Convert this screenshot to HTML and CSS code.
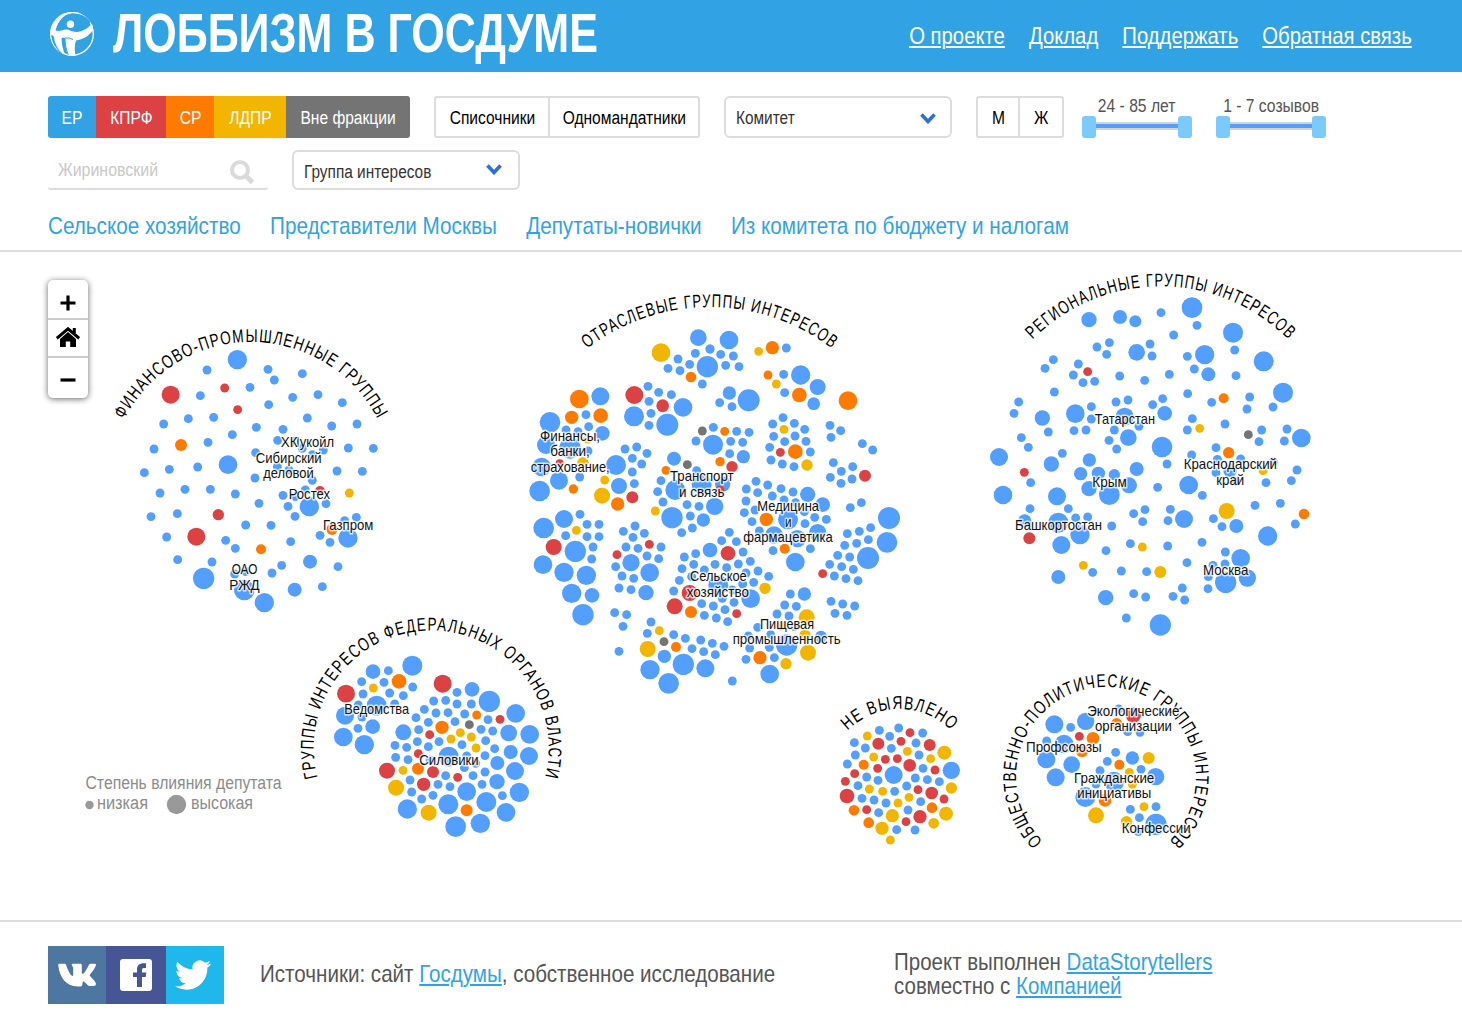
FILE: index.html
```html
<!DOCTYPE html>
<html lang="ru">
<head>
<meta charset="utf-8">
<title>Лоббизм в Госдуме</title>
<link rel="stylesheet" href="styles.css">
</head>
<body>
<header class="header">
  <a class="brand">
    <svg class="logo" viewBox="0 0 44 44" width="44" height="44">
      <ellipse cx="22" cy="22" rx="21.3" ry="21.3" fill="none" stroke="#fff" stroke-width="1.3"/>
      <path fill="#fff" d="M31 1.500C19-1.500 9 5 5.500 18.500c3 .8 6 .3 9-.7 4-1 7 2.500 12 2.200 6-.3 11-3.500 15.500-8 1 2.500 1.200 4 .9 6C39 24 33 27.500 26 28.500c-1.500 4.500-1.600 9-.5 15-3 .6-5 .4-7.500 0-2-5-2.800-10-3-17.500-1.500-.3-2.500-.3-3.300 0-.4 5.500.9 10.500 3.300 16.500C10 40 5 34 3.800 24.500L.8 23C-1 9 14-4.500 31 1.500z"/>
      <path fill="#31a3e5" d="M29.500 2.300C18 0 8.500 7 6.500 17.300c2.500.5 4.500.2 7-.6 4.500-1.300 8.500 2 13 1.800 5.500-.3 11-4 14-8.500C38 6.500 34.500 3.700 29.500 2.300z"/>
      <path fill="none" stroke="#31a3e5" stroke-width="1" d="M15 26q5-.5 8 1.500M14.800 26q0 9 3.500 17M2 23q1 12 10 18.500"/>
      <ellipse cx="20.500" cy="12.300" rx="3.700" ry="3.700" fill="#fff"/>
    </svg>
    <span class="title">ЛОББИЗМ В ГОСДУМЕ</span>
  </a>
  <nav class="nav">
    <a>О проекте</a><a>Доклад</a><a>Поддержать</a><a>Обратная связь</a>
  </nav>
</header>

<section class="filters">
  <div class="row row-top">
    <div class="factions">
      <button class="f-er"><span>ЕР</span></button><button class="f-kprf"><span>КПРФ</span></button><button class="f-sr"><span>СР</span></button><button class="f-ldpr"><span>ЛДПР</span></button><button class="f-none"><span>Вне фракции</span></button>
    </div>
    <div class="toggle toggle-type"><button><span>Списочники</span></button><button><span>Одномандатники</span></button></div>
    <div class="select"><span>Комитет</span>
      <svg viewBox="0 0 16 11" width="16" height="11"><path d="M1.500 1.500l6.500 7 6.500-7" fill="none" stroke="#2f6fdb" stroke-width="3.600"/></svg></div>
    <div class="toggle toggle-sex"><button><span>М</span></button><button><span>Ж</span></button></div>
    <div class="ranges">
      <div class="range"><span class="range-label">24 - 85 лет</span><div class="track"><i></i><b></b><i></i></div></div>
      <div class="range"><span class="range-label">1 - 7 созывов</span><div class="track"><i></i><b></b><i></i></div></div>
    </div>
  </div>
  <div class="row row-second">
    <div class="search"><span>Жириновский</span>
      <svg viewBox="0 0 24 24" width="24" height="24" fill="none" stroke="#dadada"><circle cx="10" cy="10" r="8" stroke-width="4"/><path d="M15.500 15.500l7 7" stroke-width="5"/></svg></div>
    <div class="select select-low"><span>Группа интересов</span>
      <svg viewBox="0 0 16 11" width="16" height="11"><path d="M1.500 1.500l6.500 7 6.500-7" fill="none" stroke="#2f6fdb" stroke-width="3.600"/></svg></div>
  </div>
  <nav class="presets">
    <a>Сельское хозяйство</a><a>Представители Москвы</a><a>Депутаты-новички</a><a>Из комитета по бюджету и налогам</a>
  </nav>
</section>

<main class="map">
  <svg id="bubbles" viewBox="0 252 1462 668" width="1462" height="668"></svg>
  <div class="zoomer">
    <button><svg viewBox="0 0 16 16" width="16" height="16"><path d="M8 .5v15M.5 8h15" stroke="#000" stroke-width="3.200"/></svg></button>
    <button><svg viewBox="0 0 24 20" width="24" height="20"><path d="M.8 11.300L12 1.800l11.200 9.500M18.300 6V1" fill="none" stroke="#000" stroke-width="3"/><path d="M4 12l8-7 8 7v8h-5.800v-5.500H9.800V20H4z"/></svg></button>
    <button><svg viewBox="0 0 16 16" width="16" height="16"><path d="M.5 8h15" stroke="#000" stroke-width="3.200"/></svg></button>
  </div>
</main>

<footer class="footer">
  <div class="social">
    <a class="vk"><svg viewBox="0 0 38 24" width="38" height="24"><path fill="#fff" d="M20.500 23.500C8 24 1.500 14 .3 2.500 0 1.200.6.700 1.700.700h4.600c1 0 1.500.4 1.900 1.500C9.800 7 12 11.500 14 12.800c.9.400 1.200 0 1.200-1.500V5.500c-.1-2.500-1.500-2.700-1.500-3.600 0-.7.6-1.200 1.500-1.200h7.200c1 0 1.400.5 1.400 1.600v7.400c0 1.500 1.200 1.500 2.300.2 2-2.300 3.500-5 4.700-7.800.4-1 1-1.400 2-1.400h3.700c1.500 0 1.700.8 1.300 1.900-1.300 3.500-3.600 6-5.500 8.600-.7 1-.6 1.500.2 2.300 2 2 3.600 3.700 5 6 .9 1.800.2 3.500-1.700 3.500h-4.200c-1.700 0-2.600-1.500-4-3-1.600-1.800-3-2.200-3-.1 0 1.800-.6 3.400-2.300 3.600z"/></svg></a>
    <a class="fb"><svg viewBox="0 0 32 32" width="32" height="32"><rect width="32" height="32" rx="3" fill="#fff"/><path fill="#465594" d="M17 28V18h-4v-4.500h4v-3.200c0-4.500 2.800-6.600 9-6v4.600h-2.200c-1.400 0-1.800.8-1.800 2v2.600h4.300l-.6 4.500H22V28z"/></svg></a>
    <a class="tw"><svg viewBox="0 2 24 20" width="36" height="30"><path fill="#fff" d="M23.953 4.570a10 10 0 0 1-2.825.775 4.958 4.958 0 0 0 2.163-2.723c-.951.555-2.005.959-3.127 1.184a4.920 4.920 0 0 0-8.384 4.482C7.690 8.095 4.067 6.130 1.640 3.162a4.822 4.822 0 0 0-.666 2.475c0 1.710.870 3.213 2.188 4.096a4.904 4.904 0 0 1-2.228-.616v.060a4.923 4.923 0 0 0 3.946 4.827 4.996 4.996 0 0 1-2.212.085 4.936 4.936 0 0 0 4.604 3.417 9.867 9.867 0 0 1-6.102 2.105c-.390 0-.779-.023-1.170-.067a13.995 13.995 0 0 0 7.557 2.209c9.053 0 13.998-7.496 13.998-13.985 0-.210 0-.420-.015-.630A9.935 9.935 0 0 0 24 4.590z"/></svg></a>
  </div>
  <p class="sources">Источники: сайт <a>Госдумы</a>, собственное исследование</p>
  <p class="credits">Проект выполнен <a>DataStorytellers</a><br>совместно с <a>Компанией</a></p>
</footer>
<script src="bubbles.js"></script>
</body>
</html>
```
FILE: styles.css
```css
* { box-sizing: border-box; }
body {
  margin: 0;
  width: 1462px;
  background: #fff;
  color: #555;
  font-family: "Liberation Sans", Arial, sans-serif;
  font-size: 18px;
}
a { cursor: pointer; }
button { border: 0; padding: 0; margin: 0; font: inherit; background: none; color: #000; }

/* Condensed lettering */
.title, .presets, .sources, .credits, .select span, .search span { transform-origin: 0 50%; }
.title { transform: scaleX(.783); }
.nav { transform: scaleX(.845); transform-origin: 100% 50%; }
.presets { transform: scaleX(.862); }
.factions span, .toggle span { display: inline-block; transform: scaleX(.865); white-space: nowrap; }
.select span { transform: scaleX(.855); }
.search span { transform: scaleX(.885); }
.range-label { transform: scaleX(.87); }
.sources { transform: scaleX(.858); }
.credits { transform: scaleX(.854); }

.header {
  height: 72px;
  background: #31a3e5;
  color: #fff;
  display: flex;
  justify-content: space-between;
  padding: 0 50px;
}
.brand { display: flex; gap: 19px; width: 560px; }
.logo { margin-top: 12px; flex: none; }
.title { font-size: 55px; font-weight: bold; line-height: 67px; white-space: nowrap; }
.nav { display: flex; gap: 28.5px; font-size: 24px; line-height: 72px; }
.nav a { text-decoration: underline; text-decoration-thickness: 2px; text-underline-offset: 2px; white-space: nowrap; }

.filters { height: 180px; padding: 24px 48px 0; border-bottom: 2px solid #dcdcdc; }
.row { display: flex; }
.row-top { height: 54px; gap: 24px; }
.row-second { height: 40px; gap: 24px; }
.factions { display: flex; height: 42px; border-radius: 3px; overflow: hidden; }
.factions button { color: #fff; height: 42px; padding-top: 2px; }
.factions .f-er { width: 48px; background: #31a3e5; }
.factions .f-kprf { width: 70px; background: #dc4243; }
.factions .f-sr { width: 48px; padding-left: 2px; background: #ff7b00; }
.factions .f-ldpr { width: 72px; background: #f3b600; }
.factions .f-none { width: 124px; background: #747474; }
.toggle { display: flex; height: 42px; border: 2px solid #dcdcdc; border-radius: 3px; }
.toggle button { padding-top: 2px; display: flex; justify-content: center; align-items: center; }
.toggle button + button { border-left: 2px solid #dcdcdc; }
.toggle-type { width: 266px; }
.toggle-type button:first-child { width: 112px; }
.toggle-type button:last-child { width: 150px; }
.toggle-sex { width: 88px; }
.toggle-sex button:first-child { width: 40px; }
.toggle-sex button:last-child { width: 44px; }
.select {
  width: 228px;
  height: 42px;
  border: 2px solid #dcdcdc;
  border-radius: 6px;
  display: flex;
  justify-content: space-between;
  align-items: center;
  padding: 2px 14px 0 10px;
  color: #333;
}
.select-low { height: 40px; padding: 4px 16px 0 10px; }
.select-low svg { margin-bottom: 5px; }
.ranges { display: flex; gap: 24px; margin-left: -6px; }
.range { width: 110px; display: flex; flex-direction: column; align-items: center; }
.range-label { line-height: 20px; height: 20px; white-space: nowrap; }
.track { display: flex; align-items: center; width: 110px; height: 22px; }
.track i { width: 14px; height: 22px; border-radius: 3px; background: #7acbfb; }
.track b { flex: 1; height: 8px; margin-top: -2px; background: #529fff; border: solid #d3d3d3; border-width: 2px 0; }
.search {
  width: 220px;
  border-bottom: 2px solid #dcdcdc;
  border-radius: 3px;
  display: flex;
  justify-content: space-between;
  padding: 10px 14px 0 10px;
  line-height: 20px;
  color: #c8c8c8;
}
.presets { display: flex; gap: 34px; margin-top: 20px; font-size: 24px; line-height: 32px; color: #31a3e5; }
.presets a { white-space: nowrap; }

.map { position: relative; height: 668px; overflow: hidden; }
.map > svg { display: block; }
.dot-blue { fill: #529fff; }
.dot-red { fill: #dc4243; }
.dot-orange { fill: #ff7b00; }
.dot-yellow { fill: #f3b600; }
.dot-gray { fill: #747474; }
.arc { font-size: 18.5px; fill: #000; letter-spacing: 1.7px; }
.label {
  font-size: 15px;
  fill: #111;
  stroke: #fff;
  stroke-opacity: .75;
  stroke-width: 3px;
  stroke-linejoin: round;
  paint-order: stroke;
}
.legend { font-size: 18px; fill: #8c8c8c; }
.legend circle { fill: #999; }
.zoomer {
  position: absolute;
  left: 48px;
  top: 28px;
  width: 40px;
  height: 118px;
  display: grid;
  grid-template-rows: 38px 38px 42px;
  background: #fff;
  border-radius: 5px;
  box-shadow: 0 1px 6px rgba(0, 0, 0, .6);
}
.zoomer button { display: grid; place-items: center; padding-top: 8px; }
.zoomer button:nth-child(2) { padding: 0 0 2px; }
.zoomer button:nth-child(3) { padding-top: 4px; }
.zoomer button + button { border-top: 2px solid #ccc; }

.footer { height: 102px; border-top: 2px solid #dcdcdc; padding: 24px 48px 0; display: flex; font-size: 24px; line-height: 24px; }
.footer p { margin: 0; white-space: nowrap; }
.footer p a { color: #31a3e5; text-decoration: underline; text-decoration-thickness: 2px; text-underline-offset: 2px; }
.social { display: flex; flex: none; height: 58px; width: 176px; margin-right: 36px; }
.social a { width: 58px; display: grid; place-items: center; }
.social .vk { background: #4d76a1; }
.social .fb { width: 60px; background: #465594; }
.social .tw { background: #1eb8ec; padding-right: 4px; }
.sources { flex: none; width: 634px; padding-top: 16px; }
.credits { padding-top: 4px; }
```
FILE: bubbles.js
```js
// Each chart tile has an origin in page pixels; dots are "x,y[,r]" in thirds of a pixel.
const tiles = [
  { at: [100, 310], dots: {
    blue: "412,149,29 321,180 504,178 523,210 607,191 450,232 301,257 578,262 654,254 727,278 506,284 341,322 265,326 191,342 622,324 695,348 771,342 469,352 549,358 397,374 324,397 162,417 533,391 607,415 670,420 637,434 745,414 820,415 467,428 384,464,28 293,471 208,478 133,488 532,470 567,480 465,504 711,483 787,484 637,511 255,538 331,538 180,549 406,552 549,556 586,560 616,540 477,580 564,589 628,590,29 678,581 232,611 153,620 585,619 437,645 513,646 734,632 769,622 660,676 744,684,29 690,697 572,695 200,681 377,691 406,715 233,749 336,756 630,755,21 545,766 714,770 516,789 404,792 437,785 311,805,32 433,840,31 493,878,29 584,839,21 667,830",
    red: "212,254,27 374,234 413,299 355,614,17 289,680,27 660,543,15", orange: "243,405,18 483,718,15 696,658,17", yellow: "748,549" } },
  { at: [510, 280], dots: {
    blue: "565,173,25 556,220 600,207 504,237 539,253 474,265 510,272 592,260,32 577,312 271,349,27 414,319 446,337 484,344 417,364 372,409,30 423,400 417,436 472,434,33 519,382,28 120,427,31 228,404 236,440 277,460,22 168,450 204,455 108,495,27 180,504,32 234,513 95,561,28 147,602,27 209,591 318,555,30 345,507 380,501 411,520 367,535 395,552 367,576 373,611 327,618,24 558,483 610,442 609,494,30 492,536,21 560,572 453,602 443,635 496,630,30 575,614,30 638,612,23",
    orange: "208,357,28 185,412,20 272,407,22 543,291,16 190,627,14 468,571", yellow: "453,218,28 233,477 219,548,17 284,600", red: "373,345,27 458,377,19 149,550,12", gray: "577,453 532,554" } },
  { at: [700, 280], dots: {
    blue: "87,180,28 30,207 62,223 100,228 77,256 117,260 259,204 251,283 302,285,29 353,321,24 254,338 341,371,19 88,339,20 59,368 96,380 146,361,33 110,454 147,457 92,484 128,487 89,521 130,530,20 249,413 218,432 283,430 314,448 221,469 285,468 254,485 318,484 209,502 331,516 213,540 247,552 282,560 390,436 422,452 393,472 487,491 518,510 400,548 458,560 424,574 391,592 456,597 423,610 168,604 203,615 139,627",
    orange: "217,203,20 204,285 298,345,22 444,362,28 74,454 60,545,14 286,515,22", yellow: "176,214 229,312 252,448 321,555,17", red: "96,560,17 241,517 495,587,18 60,630" } },
  { at: [510, 480], dots: {
    blue: "89,33,31 101,144,31 162,117,27 210,103 231,133 267,133 167,167 231,170 267,170 196,214,32 249,201 245,237 99,254,28 162,277,29 229,286,29 185,340,29 246,346,22 219,404,32 340,154 375,138 369,172 403,160 348,201 384,205 453,201 411,228 446,236 317,260 363,248,26 419,278,28 336,288 371,295 327,324 363,329 408,338,23 314,398 350,404 339,439 327,514 423,426 412,460 491,464 526,475 572,480 607,490 546,506 581,515 616,524 463,529,20 520,553,32 420,569,29 476,610,31 586,565,27 459,66 531,74 567,79 486,113,32 541,108 580,120,20 614,79,26 547,144 515,158 600,210,22 557,221 523,231 551,253 615,253 516,266 583,270 508,301 491,333 545,290 610,378 575,371 583,406 619,414",
    orange: "323,72,20 543,396,18 498,501,15", yellow: "276,47,24 199,151 436,93 448,452 413,507,24", red: "367,52,18 131,201,24 418,193 321,224 494,379,24 539,339,24", gray: "462,485" } },
  { at: [700, 480], dots: {
    blue: "88,157 65,182 109,185 129,216 80,263 115,252 151,244 174,273 206,289 161,307 138,279 55,315,30 128,312 152,356,28 97,330 67,355 102,367 75,389 83,425 72,499 97,603 209,582,28 138,538 149,504 223,533 208,502 260,495,32 212,464 173,442 145,468 231,402 267,408 254,375 289,379 271,342 313,342,20 283,440 363,470,18 243,26 173,38 217,48 279,36 323,43,23 252,60 138,63 165,90 133,98 287,68 368,74,22 313,95 344,112 379,118 315,131 156,125 264,118,30 178,153 222,165,26 292,176,26 353,158,26 219,212 331,206 286,246,28 451,83 484,68 567,114,33 512,143 478,154 442,161 505,179 470,190 434,196 561,187,31 504,234,33 413,226 449,231 389,253 425,260 460,268 403,288 438,296 474,302 393,364 428,372 464,378 405,400 441,406",
    orange: "199,118,20 254,206,15 243,438,14 180,533,20", yellow: "195,325,17 320,412,24 315,465,17 324,518,24 258,551,17", red: "84,220,22 368,281 110,401" } },
  { at: [980, 260], dots: {
    blue: "327,179,23 420,171,21 466,184,18 543,158 636,143,31 651,196 581,225 759,218,30 764,270 851,304,30 351,261 388,248 380,283 470,277,25 510,252 516,288 622,289 674,284,29 643,327 685,343,21 220,299 195,325 295,312 280,345 309,368 344,364 419,348 494,361 568,343 768,347 909,398,30 223,396 116,426 102,460 187,474,23 286,461,28 334,440 334,477 282,512 318,510 205,516 408,426 444,420 434,470,27 477,499 403,510 387,541 445,533,25 410,567 518,434 548,416 554,460,22 623,401 695,427 809,411 801,447 879,441 637,476 622,510 735,492 845,510 837,545 921,507 913,543 964,534,28 124,533 145,562 57,591,27 247,580 214,612,23 328,600,20 546,561,31 708,563 635,585 782,597",
    red: "323,335", orange: "731,415,15 746,578,17", yellow: "659,505", gray: "805,524" } },
  { at: [980, 440], dots: {
    blue: "561,72 712,58 708,98 750,92,20 951,90 934,122 858,128 880,65 768,125 302,101,20 355,100,20 403,104,17 470,87,21 327,146,23 388,164,31 447,136,24 152,128 69,165,28 231,169,27 150,206 265,206 287,234 323,231 134,243,20 235,248,30 300,284,29 244,315,27 395,258 533,142 626,135,28 667,166 495,209 461,221 488,245 571,208 564,242 612,237,27 700,236 726,260 769,258,21 825,196 901,190 946,252 863,288,29 451,311 378,332 563,318 666,307 621,368 338,397 424,393 500,395 235,411,21 736,336 782,355,28 735,372 699,376 685,410 802,414,26 737,427,32 684,446 607,444 579,469 614,480 461,461 497,471 377,473,23 439,534 541,555,32",
    red: "133,97 148,295,18", orange: "972,222,16", yellow: "849,92 740,213,24 487,321 310,376 541,396,18" } },
  { at: [290, 600], dots: {
    blue: "367,197,30 249,215,22 295,212 215,245 282,247 219,282 299,279 340,287 368,261 205,315 260,317,30 314,312 216,351 165,347,27 204,385 248,380,22 160,411,28 223,434,29 501,277 546,268,22 598,304,32 431,303 467,301 501,312 544,312 403,328 438,339 474,338 524,342 594,359 378,353 415,367 495,365 340,397,24 386,389 382,425 447,425 415,440 315,436 350,442 317,472 354,479 573,388 608,393 587,422 516,434 614,446 585,467 530,468 476,470,30 420,480 523,503 557,490 585,516 549,527 467,527 576,553 444,553 480,560 360,540 365,576 429,586 395,597 677,340,28 656,399,25 719,403,28 662,456,21 717,468,27 622,489,21 675,513,27 621,545,23 688,577,29 637,587 530,575,28 475,613,30 589,606,30 648,637,28 571,670,29 497,680,31 352,627,29",
    red: "168,281,27 458,251,27 630,358 419,404 385,461 291,512,24 429,516,18 503,532 401,553,20", orange: "327,244,22 560,345 456,382,20 384,506,18 530,631,18", yellow: "250,264 511,398 483,417 544,411 558,444 339,511 318,563,24 416,638,24", gray: "538,374" } },
  { at: [820, 660], dots: {
    blue: "178,211 236,204 308,219 209,229 288,249 103,248 136,264 214,265 106,285 297,285 82,312 309,325 221,345,27 394,331,26 140,351 174,361 286,354 322,359 358,365 114,377 260,378 224,394 126,415 162,420 198,429 302,425 264,450 176,458 230,509 285,510 703,193,27 752,202 797,184,26 680,243 732,252,28 679,298,27 755,314,25 707,352,27 896,147 923,215 960,217 887,277 937,294,20 862,304 840,332 963,328 1007,350,26 882,365,30 828,372 796,411,30 931,448 1008,440 958,473 1008,493,32 955,515",
    red: "270,218 243,244 175,251,18 329,255,18 196,298 232,296 269,316,19 173,325 345,330 104,341 76,364 294,389 335,399,19 372,417 81,408,22 140,449 300,470,20 258,485 778,229 940,165,23", yellow: "142,228 373,278,21 262,274 161,291 332,296 148,387 188,394 394,384,17 267,412 234,429 378,461,21 217,467,20 341,490,16 186,505,20 211,540 986,294,18 928,337 937,373 828,466,24 972,440 919,485,17", orange: "131,314,15 102,451,16 336,443,16 146,488,16 819,235,19 890,190,16 786,272,19 898,314,15 855,421,19" } }
];

// Arc titles: text, centre x, centre y, radius, text length.
const arcs = [
  ["ФИНАНСОВО-ПРОМЫШЛЕННЫЕ ГРУППЫ", 251, 484.5, 142.5, 313],
  ["ОТРАСЛЕВЫЕ ГРУППЫ ИНТЕРЕСОВ", 709.5, 508.5, 201.4, 264],
  ["РЕГИОНАЛЬНЫЕ ГРУППЫ ИНТЕРЕСОВ", 1160.5, 467, 180.6, 285],
  ["ГРУППЫ ИНТЕРЕСОВ ФЕДЕРАЛЬНЫХ ОРГАНОВ ВЛАСТИ", 431.2, 748, 117.5, 429],
  ["НЕ ВЫЯВЛЕНО", 899.5, 782, 73, 116],
  ["ОБЩЕСТВЕННО-ПОЛИТИЧЕСКИЕ ГРУППЫ ИНТЕРЕСОВ", 1106, 777, 90, 426]
];

// Group labels: text, left, right, baseline.
const labels = [
  ["Лукойл", 291, 334, 447], ["ХК", 280.7, 297.5, 447], ["Сибирский", 255.7, 321.7, 463.3], ["деловой", 263.3, 313.7, 478.5],
  ["Ростех", 288.7, 330, 499], ["Газпром", 323, 373.3, 530.3], ["ОАО", 231.7, 257.3, 574.3], ["РЖД", 229.3, 259.7, 590],
  ["Финансы,", 540, 600, 441.3], ["банки,", 550.3, 589.7, 456.5], ["страхование,", 530.7, 609.7, 472.3],
  ["Транспорт", 670, 733.5, 481], ["и связь", 679, 724.5, 497],
  ["Медицина", 757.3, 819, 511.3], ["и", 785, 791.5, 527], ["фармацевтика", 743.3, 832.7, 542.3],
  ["Сельское", 690, 746.7, 581], ["хозяйство", 686.7, 749, 597], ["Пищевая", 760, 814, 629], ["промышленность", 732.7, 840.7, 644.3],
  ["Татарстан", 1094.7, 1155, 424.3], ["Краснодарский", 1183.7, 1277, 469], ["край", 1216.3, 1244.3, 485],
  ["Крым", 1092.3, 1126.7, 487.5], ["Башкортостан", 1015, 1102, 530.7], ["Москва", 1203, 1248.3, 575],
  ["Ведомства", 344.3, 409, 714.3], ["Силовики", 419.3, 478.7, 765.3],
  ["Экологические", 1087.3, 1179.3, 716], ["организации", 1095, 1172, 731.5], ["Профсоюзы", 1026, 1101.7, 752.3],
  ["Гражданские", 1074, 1154.3, 783.3], ["инициативы", 1077.3, 1151.3, 798.5], ["Конфессии", 1121.7, 1190.7, 833.3]
];

let out = "";
for (const tile of tiles) {
  out += `<g transform="translate(${tile.at}) scale(${1 / 3})">`;
  for (const [color, list] of Object.entries(tile.dots))
    for (const dot of list.split(" ")) {
      const [x, y, r = 13.3] = dot.split(",");
      out += `<circle class="dot-${color}" cx="${x}" cy="${y}" r="${r}"/>`;
    }
  out += "</g>";
}
arcs.forEach(([text, x, y, r, len], i) => {
  out += `<path id="arc${i}" fill="none" d="M${x} ${y + r}A${r} ${r} 0 0 1 ${x} ${y - r}A${r} ${r} 0 0 1 ${x} ${y + r}"/>
    <text class="arc" textLength="${len}" lengthAdjust="spacingAndGlyphs"><textPath href="#arc${i}" startOffset="${Math.PI * r - len / 2}" textLength="${len}" lengthAdjust="spacingAndGlyphs">${text}</textPath></text>`;
});
for (const [text, x1, x2, y] of labels)
  out += `<text class="label" x="${x1}" y="${y - 0.4}" textLength="${x2 - x1}" lengthAdjust="spacingAndGlyphs">${text}</text>`;
out += `<g class="legend">
  <text x="85.5" y="789" textLength="196" lengthAdjust="spacingAndGlyphs">Степень влияния депутата</text>
  <circle cx="89.5" cy="805" r="4.2"/><text x="97" y="809" textLength="51" lengthAdjust="spacingAndGlyphs">низкая</text>
  <circle cx="176.5" cy="804.5" r="9.7"/><text x="191" y="809" textLength="62" lengthAdjust="spacingAndGlyphs">высокая</text></g>`;
document.getElementById("bubbles").innerHTML = out;
```
